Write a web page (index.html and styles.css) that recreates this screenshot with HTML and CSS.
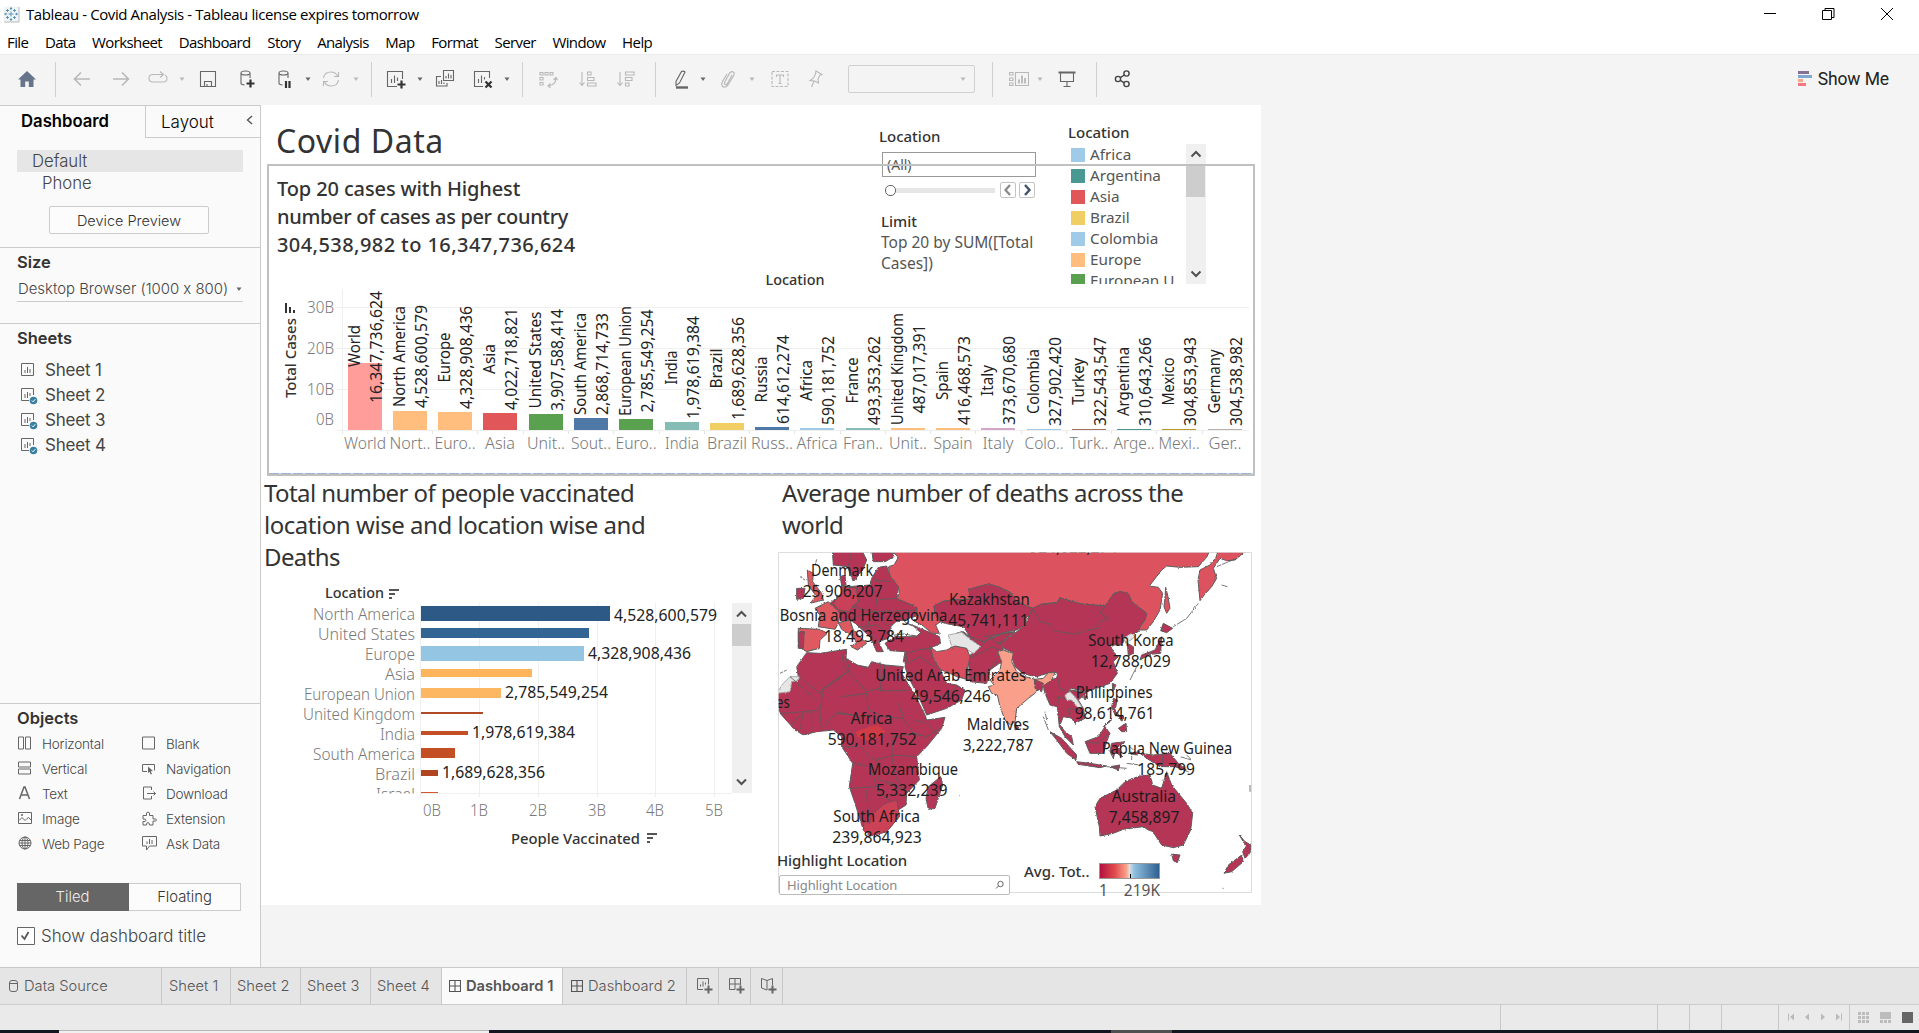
FILE: index.html
```html
<!DOCTYPE html>
<html lang="en">
<head>
<meta charset="utf-8">
<title>Tableau - Covid Analysis</title>
<link rel="stylesheet" href="styles.css">
</head>
<body>
<svg class="defs" width="0" height="0" aria-hidden="true">
  <symbol id="caret" viewBox="0 0 8 20"><path d="M1.5 8.5h5L4 12z" fill="currentColor"/></symbol>
  <symbol id="sheet-used" viewBox="0 0 17 17"><path d="M12.500 7V.5H.5v12H8M4 10V6M6.500 10V4M9 8V5" fill="none" stroke="currentColor"/><circle cx="12.500" cy="12.500" r="3.800" fill="#3a7f9f"/><path d="M10.800 12.500l1.300 1.300 2.200-2.600" fill="none" stroke="#fff"/></symbol>
  <symbol id="grid" viewBox="0 0 12 12"><path d="M.5.5h11v11H.5zM6 .5v11M.5 6h11" fill="none" stroke="currentColor" stroke-width="1.100"/></symbol>
  <symbol id="up" viewBox="0 0 20 20"><path d="M5.500 12.500L10 8l4.500 4.500" fill="none" stroke="#505050" stroke-width="2"/></symbol>
</svg>

<header class="titlebar">
  <svg class="app-icon" width="17" height="17" viewBox="0 0 17 17"><path d="M.5.5h15.500v15.500H.5z" fill="#f1f4f6"/><path d="M16 1v15H1" fill="none" stroke="#b9b9b9"/><path d="M8 5.500v5M5.500 8h5M8 1v3M6.800 2.500h2.400M8 12v3M6.800 13.500h2.400M1.200 8h3M2.700 6.800v2.400M12 8h3M13.500 6.800v2.400M4.500 3v3M3 4.500h3M11.500 3v3M10 4.500h3M4.500 10v3M3 11.500h3M11.500 10v3M10 11.500h3" stroke="#4d8eb5" stroke-width=".9"/></svg>
  <span class="title">Tableau - Covid Analysis - Tableau license expires tomorrow</span>
  <svg class="winbtns" width="140" height="28" viewBox="0 0 140 28"><path d="M11 13.500h12M69.500 10.500h9v9h-9zM72 10.500v-2h9v9h-2M128 8l12 12M140 8l-12 12" fill="none" stroke="#000"/></svg>
</header>
<nav class="menu"><span>File</span><span>Data</span><span>Worksheet</span><span>Dashboard</span><span>Story</span><span>Analysis</span><span>Map</span><span>Format</span><span>Server</span><span>Window</span><span>Help</span></nav>

<div class="toolbar">
  <svg class="i m17 home" viewBox="0 0 20 20"><path d="M10 2l9 8.500h-2.500V18h-4.700v-5.500H8.200V18H3.500v-7.500H1z"/></svg>
  <i class="sep m18"></i>
  <svg class="i m16 off" viewBox="0 0 20 20"><path d="M18 10H3M9 3.500L2.500 10 9 16.500" stroke-width="1.600"/></svg>
  <svg class="i m19 off" viewBox="0 0 20 20"><path d="M2 10h15M11 3.500l6.500 6.500-6.500 6.500" stroke-width="1.600"/></svg>
  <svg class="i m17 off" viewBox="0 0 20 20"><path d="M8 5.500H5q-4 0-4 3.700t4 3.800h10q4 0 4-3.800 0-2.500-2-3.300M8 5.500h7M12 2.500l3.500 3-3.500 3"/></svg>
  <svg class="c m10 off"><use href="#caret"/></svg>
  <svg class="i m12 on" viewBox="0 0 20 20"><path d="M2.500 2.500h15v15h-15zM6.500 17.500v-5h7v5M9 17.500V15"/></svg>
  <svg class="i m18 on" viewBox="0 0 20 20"><path d="M5 4.500v9.800q0 1.500 3.500 1.700M14 9V4.500"/><ellipse cx="9.500" cy="4" rx="4.500" ry="2"/><path d="M14.500 10.500v8M10.500 14.500h8" stroke="#333" stroke-width="2.200"/></svg>
  <svg class="i m18 on" viewBox="0 0 20 20"><path d="M5 4.500v9.800q0 1.500 3.500 1.700M14 9V4.500"/><ellipse cx="9.500" cy="4" rx="4.500" ry="2"/><path d="M12 12v7M15.500 12v7" stroke="#333" stroke-width="2.200"/></svg>
  <svg class="c m10 on"><use href="#caret"/></svg>
  <svg class="i m9 off" viewBox="0 0 20 20"><path d="M2.500 9q1-6 7.500-6 4.500 0 6.500 4M17.500 11q-1 6-7.500 6-4.500 0-6.500-4M17.500 3v4.500H13M2.500 17v-4.500H7"/></svg>
  <svg class="c m11 off"><use href="#caret"/></svg>
  <i class="sep m11"></i>
  <svg class="i m14 on" viewBox="0 0 20 20"><path d="M16.500 10V2.500h-15v15H11M5.500 14v-4M8.500 14V6.500M11.500 12V8.500"/><path d="M15.500 11.500v8M11.500 15.500h8" stroke="#333" stroke-width="2.200"/></svg>
  <svg class="c m10 on"><use href="#caret"/></svg>
  <svg class="i m11 on" viewBox="0 0 20 20"><path d="M8.500 1.500h10v10h-10zM11 9.500V7M13.500 9.500v-5M16 9.500V6M6 7.500H1.500v9.500H12v-3M4 15v-3M6.500 15v-4M9 15v-1.500"/></svg>
  <svg class="i m18 on" viewBox="0 0 20 20"><path d="M16.500 9V2.500h-15v15H10M5.500 14v-4M8.500 14V6.500M11.500 10.500V8"/><path d="M12.500 12.500l6 6M18.500 12.500l-6 6" stroke="#333" stroke-width="2.200"/></svg>
  <svg class="c m10 on"><use href="#caret"/></svg>
  <i class="sep m11"></i>
  <svg class="i m15 off" viewBox="0 0 20 20"><path d="M2 3.500h3v2.500H2zM7 3.500h3v2.500H7zM12 3.500h3v2.500h-3zM2 8.500h3V11H2zM2 13.500h3V16H2zM18 9q0 7-8 8M15.500 11l2.500-2.500 1.500 2.500M12.500 14.500L10 17l2.500 1.800"/></svg>
  <svg class="i m20 off" viewBox="0 0 20 20"><path d="M4 3v13M1.500 13.500L4 16.500l2.500-3M9.500 3h3.500v3H9.500zM9.500 8.500H16v3H9.500zM9.500 14H18v3H9.500z"/></svg>
  <svg class="i m18 off" viewBox="0 0 20 20"><path d="M4 3v13M1.500 13.500L4 16.500l2.500-3M9.500 3H18v3H9.500zM9.500 8.500H16v3H9.500zM9.500 14h3.500v3H9.500z"/></svg>
  <i class="sep m19"></i>
  <svg class="i m16 on" viewBox="0 0 20 20"><path d="M9.500 2.500q2-1 3.500.5l-5.500 11-3.500 2.500 0-4z"/><path d="M4 18.500h12" stroke-width="2.400"/></svg>
  <svg class="c m7 on"><use href="#caret"/></svg>
  <svg class="i m11 off" viewBox="0 0 20 20"><path d="M14 6l-4.500 8.500q-1.800 2-3 .3-.3-1 .4-2L12 3.500q2.500-2 4 .2.400 1.300-.4 3L10 16q-3 3.500-5.800 1-1-2 .3-4.500L9 5" stroke-width="1.200"/></svg>
  <svg class="c m10 off"><use href="#caret"/></svg>
  <svg class="i m14 off" viewBox="0 0 20 20"><path d="M2 2.500h16v15H2z" stroke-dasharray="3 1.500"/><path d="M6.500 8V6h7v2M10 6v8.500M8.500 14.500h3"/></svg>
  <svg class="i m16 off" viewBox="0 0 20 20"><path d="M10 2l6 3.500-2 .5-2 4 .5 4-4-2-4.500-.500 3.500-2.500 2-4zM8 12.500l-2.500 5.500"/></svg>
  <div class="combo m22"><svg class="c off"><use href="#caret"/></svg></div>
  <i class="sep m17"></i>
  <svg class="i m16 off" viewBox="0 0 20 20"><path d="M.5 3.500h3.500V6H.5zM.5 9h3.500v2.500H.5zM.5 14h3.500v2.500H.5zM6.500 3.500h13v13h-13z"/><path d="M10 14.500v-4M13 14.500V6.500M16 14.500V9" stroke-width="1.800"/></svg>
  <svg class="c m7 off"><use href="#caret"/></svg>
  <svg class="i m13 on" viewBox="0 0 20 20"><path d="M3.500 4v8.500h13V4M10 13v4.500M6.500 17.500h7"/><path d="M1.500 3.500h17" stroke-width="2"/></svg>
  <i class="sep m19"></i>
  <svg class="i m16 on dark" viewBox="0 0 20 20"><circle cx="5" cy="10" r="2.600"/><circle cx="13.500" cy="4.500" r="2.600"/><circle cx="13.500" cy="15" r="2.600"/><path d="M7.300 8.600l4-2.600M7.300 11.400l4 2.400"/></svg>
  <div class="showme"><svg width="14" height="16"><path d="M0 0h11v3H0z" fill="#857096"/><path d="M0 4h14v3H0z" fill="#82a6cf"/><path d="M0 8h5v3H0z" fill="#f5a988"/><path d="M0 12h8v3H0z" fill="#f57781"/></svg><span>Show Me</span></div>
</div>

<div class="work">
  <aside class="side">
    <div class="tabs"><b>Dashboard</b><span class="layout">Layout</span><svg class="chev" width="8" height="10"><path d="M6 1L1.500 5 6 9" fill="none" stroke="#555" stroke-width="1.400"/></svg></div>
    <section class="device">
      <div class="dev-default">Default</div>
      <div class="dev-phone">Phone</div>
      <button class="preview">Device Preview</button>
    </section>
    <section class="size"><h2>Size</h2><div class="sizebox"><span>Desktop Browser (1000 x 800)</span><svg class="c"><use href="#caret"/></svg></div></section>
    <section class="sheets"><h2>Sheets</h2>
      <ul>
        <li><svg width="17" height="17" viewBox="0 0 17 17"><path d="M.5.5h12v12H.5zM4 10V7M6.500 10V4M9 10V6" fill="none" stroke="#666"/></svg>Sheet 1</li>
        <li><svg width="17" height="17"><use href="#sheet-used"/></svg>Sheet 2</li>
        <li><svg width="17" height="17"><use href="#sheet-used"/></svg>Sheet 3</li>
        <li><svg width="17" height="17"><use href="#sheet-used"/></svg>Sheet 4</li>
      </ul>
    </section>
    <section class="objects"><h2>Objects</h2>
      <div class="objgrid">
        <span><svg viewBox="0 0 15 15"><path d="M.5 1h5v12h-5zM7.500 1h5v12h-5z"/></svg>Horizontal</span>
        <span><svg viewBox="0 0 15 15"><path d="M.5 1h12v12H.5z"/></svg>Blank</span>
        <span><svg viewBox="0 0 15 15"><path d="M.5 1h12v5H.5zM.5 8h12v5H.5z"/></svg>Vertical</span>
        <span><svg viewBox="0 0 15 15"><path d="M5 10.500H.5v-7h12v6"/><path d="M6 5.500l5 4.500-2.300.3 1.300 2.700-1.300.500-1.200-2.700L6 12z" fill="#666" stroke="none"/></svg>Navigation</span>
        <span><svg viewBox="0 0 15 15"><path d="M1.500 13L6 1h1l4.500 12M3.500 9h6" stroke-width="1.500"/></svg>Text</span>
        <span><svg viewBox="0 0 15 15"><path d="M9.500 4V1H1.500v12h8v-3M5 7.500h8.500M11.500 5.500l2 2-2 2"/></svg>Download</span>
        <span><svg viewBox="0 0 15 15"><path d="M.5 1.500h13v11H.5zM1 9.500l3-3 3 3 2-2 1.500-1 3 3"/><circle cx="4" cy="4" r=".7"/></svg>Image</span>
        <span><svg viewBox="0 0 15 15"><path d="M1 4.500h3.500q-.7-3.500 1.500-3.500t1.500 3.500H11V8q3.500-.7 3.500 1t-3.500 1v4H7.500q0-2.500-1.500-2.500T4.500 14H1v-3.500q3 .5 3-1.200T1 8z"/></svg>Extension</span>
        <span><svg viewBox="0 0 15 15"><circle cx="7" cy="7" r="6"/><ellipse cx="7" cy="7" rx="3" ry="6"/><path d="M7 1v12M1.500 4.500h11M1 7h12M1.500 9.500h11"/></svg>Web Page</span>
        <span><svg viewBox="0 0 15 15"><path d="M.5.500h14v9.500H7.500L4.500 14v-4h-4zM5 8V5.500M7.500 8V3M10 8V4"/></svg>Ask Data</span>
      </div>
      <div class="seg"><span class="sel">Tiled</span><span>Floating</span></div>
      <label class="chk"><svg width="18" height="18"><path d="M.5.5h17v17H.5z" fill="#fff" stroke="#666"/><path d="M4.500 8.500L7.500 12l4-7" fill="none" stroke="#555" stroke-width="1.800"/></svg>Show dashboard title</label>
    </section>
  </aside>

  <main class="dash">
    <h1>Covid Data</h1>
    <section class="zone">
      <p class="zt"><span class="z1">Top 20 cases with Highest</span><br><span class="z2">number of cases as per country</span><br><span class="z3">304,538,982 to 16,347,736,624</span></p>
      <svg id="cases" width="983" height="215" viewBox="269 258 983 215"></svg>
    </section>
    <div class="bottom">
      <section class="vac">
        <h3>Total number of people vaccinated<br><span class="v2">location wise and location wise and</span><br>Deaths</h3>
        <svg id="vac" width="509" height="333" viewBox="261 572 509 333"></svg>
      </section>
      <section class="deaths">
        <h3>Average number of deaths across the<br>world</h3>
        <svg class="map" width="474" height="341" viewBox="24 246 1422 1023">
          <defs>
            <filter id="coast" x="0" y="0" width="1" height="1" filterUnits="objectBoundingBox"><feTurbulence type="fractalNoise" baseFrequency=".16" numOctaves="2" seed="4"/><feDisplacementMap in="SourceGraphic" scale="7" xChannelSelector="R" yChannelSelector="G"/></filter>
            <clipPath id="frame"><path d="M26 248h1418v1020H26z"/></clipPath>
          </defs>
          <path d="M25.500 247.500h1419v1020h-1419z" fill="#fff" stroke="#dcdcdc" stroke-width="3"/>
          <g clip-path="url(#frame)">
          <g filter="url(#coast)" class="land">
            <path d="M0 0h1500v1320H0z" fill="none" stroke="none"/>
            <path class="ru" d="M362 240L385 262 372 285 355 290 360 318 365 335 385 350 388 372 375 385 400 395 440 412 444 438 430 452 460 468 485 490 508 490 497 465 512 455 495 432 492 408 515 395 545 390 600 388 597 358 655 342 685 350 722 368 740 395 790 415 815 402 862 398 868 383 900 400 935 402 1005 408 1022 400 1030 372 1050 365 1075 370 1085 395 1130 430 1125 450 1110 470 1108 480 1130 480 1150 455 1170 420 1178 370 1165 352 1138 348 1175 300 1190 288 1230 292 1285 290 1310 262 1320 240z"/>
            <path class="ru" d="M1284 330L1290 300 1320 285 1338 262 1345 240 1430 240 1395 270 1370 272 1350 265 1330 295 1340 325 1325 350 1305 372 1290 392z"/>
            <path class="ru" d="M1187 352L1194 380 1200 415 1190 430 1182 410 1185 380z"/>
            <path class="dk" d="M492 408L515 395 545 390 600 388 597 358 655 342 685 350 722 368 740 395 788 415 788 440 770 440 765 465 740 480 700 488 670 500 640 515 620 510 600 500 580 470 550 465 525 460 510 455 495 432z"/>
            <path class="dk" d="M788 415L815 402 862 398 868 383 935 402 1005 408 1030 372 1050 365 1075 370 1085 395 1130 430 1125 450 1110 470 1105 485 1070 500 1055 525 1020 525 1030 545 1045 560 1030 575 1042 610 1020 640 980 655 950 665 925 660 905 655 890 665 870 660 862 640 862 610 850 605 800 620 760 612 735 590 725 560 730 548 700 535 690 520 740 485 765 465z"/>
            <path class="ln" d="M788 415L810 455 838 462 850 482 915 492 950 482 985 475 990 455 1015 445 990 430 1005 408"/>
            <path class="dk" d="M560 490L580 485 600 500 640 515 700 490 735 485 690 520 700 540 682 545 695 575 660 600 650 640 600 635 595 560 632 530 600 505 575 485z"/>
            <path class="ln" d="M595 565L640 545 665 530 690 540M632 530L660 500 680 520 700 515M600 625L650 610 680 570M640 500L735 485"/>
            <path class="na" d="M535 495L575 487 600 508 632 530 610 550 585 535 545 530z"/>
            <path class="dk" d="M380 450L440 470 485 490 508 500 512 520 480 535 500 560 450 560 412 555 410 585 400 575 405 545 360 542 345 520 375 500 440 500z"/>
            <path class="sea" d="M362 470L378 455 400 450 412 462 430 468 452 488 440 498 400 492 368 496z"/>
            <path class="dk" d="M412 550L440 540 480 535 490 565 510 600 530 640 560 645 585 660 575 690 530 715 470 735 455 700 430 650 415 620 405 590z"/>
            <path class="ir" d="M480 530L500 545 530 540 555 528 590 535 600 560 592 600 600 630 560 620 530 605 510 600 490 565z"/>
            <path class="ln" d="M412 580L450 560 490 590M470 690L540 670 560 650M420 625L450 600"/>
            <path class="dk" d="M110 548L150 550 230 538 228 565 262 585 295 592 305 575 345 585 400 590 395 610 435 675 465 735 470 750 525 742 515 775 470 830 440 860 448 930 410 970 408 1005 385 1020 388 1040 350 1085 300 1098 280 1080 255 1000 238 950 248 880 215 830 215 800 190 780 140 785 100 795 75 780 30 730 20 665 85 620 80 590z"/>
            <path class="na" d="M20 670L40 640 60 620 88 620 85 632 65 635 60 665z"/>
            <path class="ln" d="M88 620L150 670 160 655 240 600 228 565M215 550L222 590 240 610 290 665 330 655 330 575M330 662H420M240 600L160 660 150 720 100 725 30 730M215 680L290 670 295 720 340 740 400 745M200 725L270 740 300 735M385 700L400 745 430 790 470 800 510 775M125 725V785M150 725L155 780M165 770L195 730 250 735M65 765L90 735M215 830L270 830 300 860 320 870 370 855 440 860M248 880L300 890 320 950 240 955M370 800L365 860 380 930 410 970M320 870L325 930 375 940M290 960L295 1050M320 960L370 1000 310 1030M400 960L350 940M430 750L470 760 500 790M365 800L440 790M60 620L140 690M345 585L330 662M100 725L90 780"/>
            <path class="car" d="M258 785L300 768 325 765 348 785 330 800 290 812 262 800z"/>
            <path class="sa" d="M282 1055L300 1060 310 1030 345 1000 380 990 385 1020 388 1040 350 1085 300 1098 280 1080z"/>
            <path class="dk" d="M512 920L518 945 495 1015 475 1018 468 985 475 950z"/>
            <path class="in" d="M683 545L700 540 730 550 725 575 740 605 765 620 795 628 820 625 835 608 855 608 845 630 825 645 800 660 795 670 775 685 740 715 735 755 722 765 705 750 690 710 682 675 665 670 655 650 672 645 660 630 690 600 695 575z"/>
            <path class="dk" d="M793 628L820 640 815 665 795 655zM735 755L745 775 735 780z"/>
            <path class="dk" d="M820 648L845 630 862 620 870 655 890 665 905 660 950 668 925 690 940 715 945 745 915 760 905 745 880 740 870 765 885 785 905 800 910 825 885 800 868 770 862 710 840 705 825 670z"/>
            <path class="na" d="M885 675L900 665 915 680 935 710 925 715 905 690 890 690zM1060 505L1085 490 1095 500 1070 520z"/>
            <path class="ln" d="M862 710L865 680 885 685M900 740L895 715 930 720"/>
            <path class="dk" d="M187 240H275L290 270 278 300 250 335 240 310 232 290 190 285zM305 240H362L372 260 345 275 310 275z"/>
            <path class="ln" d="M235 290L245 245"/><path class="dk" d="M210 320L225 315 228 345 215 345z"/>
            <path class="dk" d="M325 292L350 288 360 318 385 350 380 385 440 412 440 438 400 450 375 455 362 470 355 505 325 515 340 545 320 545 300 500 255 460 240 450 215 455 200 420 180 400 215 370 215 345 235 350 300 345 305 325z"/>
            <path class="de" d="M190 400L215 370 215 350 260 355 265 395 235 425 205 420z"/>
            <path class="ln" d="M260 355L265 395 245 410 315 425 320 390 310 350M315 425L440 420M245 445L290 430 315 425 355 470M270 470L320 465 350 490M300 440L290 480 320 510M330 388L380 385M310 330L360 335"/>
            <path class="uk" d="M135 415L175 395 210 430 205 460 195 478 145 470 150 435z"/>
            <path class="uk" d="M85 475L150 478 172 490 150 510 148 535 110 545 85 530z"/><path class="dk" d="M85 485H103L100 535H85z"/>
            <path class="uk" d="M205 458L240 450 250 480 285 515 290 520 262 540 240 528 260 520 250 500 215 478z"/>
            <path class="uk" d="M112 300L130 310 128 335 155 370 160 390 120 400 138 378 115 345z"/>
            <path class="dk" d="M80 355L105 355 100 385 80 388z"/>
            <path class="dk" d="M840 785L875 805 920 855 918 870 890 850 860 810zM920 875L960 880 1010 888 990 893 925 883zM945 815L985 800 1005 770 1020 790 1010 815 1000 850 960 850zM1025 820L1065 815 1045 830 1055 860 1035 845 1030 865 1020 845zM1030 685L1042 690 1035 720 1050 740 1035 735 1025 710zM1045 775L1068 760 1070 785 1055 785zM1020 890L1050 885 1045 900zM1110 850L1150 855 1200 850 1225 880 1255 905 1215 890 1170 890 1130 865zM1027 640L1038 645 1028 665zM1000 770L1025 745 1020 755zM1045 735L1062 740 1055 755zM940 675L952 680 945 690zM1075 850L1110 845 1100 855z"/>
            <path class="ln" d="M1177 850V890M945 815L985 820 1010 795M820 740L835 780M1080 830L1090 840M1070 880L1110 885M1230 860L1265 870 1250 855M825 725L830 750M1010 890L1070 895M1085 845L1085 870"/>
            <path class="dk" d="M990 985L1040 960 1065 935 1090 925 1110 918 1140 915 1148 945 1175 955 1190 905 1205 945 1225 970 1250 1000 1268 1030 1262 1080 1240 1125 1210 1133 1175 1125 1155 1095 1150 1085 1135 1080 1120 1070 1060 1078 1030 1090 990 1098 988 1070 975 1010zM1205 1152L1230 1155 1222 1178 1210 1172z"/>
            <path class="dk" d="M1408 1095L1425 1115 1443 1125 1440 1150 1425 1165 1418 1145 1428 1130zM1415 1155L1420 1175 1385 1205 1362 1210 1375 1185z"/>
            <path class="dk" d="M1180 460L1208 475 1190 488 1172 482zM1175 500L1172 550 1140 553 1110 570 1115 555 1155 540zM1072 520L1090 530 1090 550 1075 558z"/>
            <path class="ln" d="M1210 470L1250 445 1285 400M1355 345L1372 350M140 268L135 285M30 610L50 600M1100 590L1080 630M1440 945V965M1358 1255h3M568 977h3M1340 290L1400 265M90 320L105 330"/>
          </g>
          <g class="ml" id="maplabels"></g>
          </g>
        </svg>
        <div class="hl"><b>Highlight Location</b><div class="hlbox"><span>Highlight Location</span><svg width="10" height="10"><circle cx="5.500" cy="4" r="2.700" fill="none" stroke="#666"/><path d="M3.500 6L1 8.500" stroke="#666"/></svg></div></div>
        <div class="ramp"><b>Avg. Tot..</b><div><div class="bar"></div><p><span>1</span><span>219K</span></p></div></div>
      </section>
    </div>

    <div class="filter">
      <b>Location</b>
      <div class="all">(All)</div>
      <div class="slider"><i class="knob"></i><i class="track"></i><svg width="36" height="17"><rect x=".5" y=".5" width="15" height="15" rx="1.500" fill="#fff" stroke="#c4c4c4"/><rect x="19.500" y=".5" width="15" height="15" rx="1.500" fill="#fff" stroke="#c4c4c4"/><path d="M10 3L5.500 8l4.500 5" fill="none" stroke="#888" stroke-width="2.200"/><path d="M25 3l4.500 5-4.500 5" fill="none" stroke="#43536e" stroke-width="2.400"/></svg></div>
      <b class="limit">Limit</b>
      <p>Top 20 by SUM([Total<br>Cases])</p>
    </div>
    <div class="legend">
      <b>Location</b>
      <div class="lgbody">
        <ul><li><i class="c1"></i>Africa</li><li><i class="c2"></i>Argentina</li><li><i class="c3"></i>Asia</li><li><i class="c4"></i>Brazil</li><li><i class="c1"></i>Colombia</li><li><i class="c5"></i>Europe</li><li><i class="c6"></i>European U</li></ul>
        <div class="scroll"><svg width="20" height="21"><use href="#up" width="20" height="20"/></svg><i></i><svg class="dn" width="20" height="21"><use href="#up" width="20" height="20"/></svg></div>
      </div>
    </div>
    <div class="outline"></div>
  </main>
</div>

<footer class="sheettabs">
  <span class="t ds"><svg width="9" height="12"><rect x=".5" y=".5" width="8" height="11" rx="2.500" fill="none" stroke="#666"/><path d="M.5 3.500h8" stroke="#666"/></svg>Data Source</span>
  <span class="t s1">Sheet 1</span><span class="t s2">Sheet 2</span><span class="t s2">Sheet 3</span><span class="t s3">Sheet 4</span>
  <span class="t d1"><svg width="12" height="12"><use href="#grid"/></svg>Dashboard 1</span>
  <span class="t d2"><svg width="12" height="12"><use href="#grid"/></svg>Dashboard 2</span>
  <span class="t n"><svg width="16" height="16" viewBox="0 0 16 16"><path d="M11.500 6.500v-6H.5v11H6M3.500 8.500v-2M6 8.500v-5M8.500 6.500v-2"/><path d="M11.500 7.500v8M7.500 11.500h8" stroke-width="2"/></svg></span>
  <span class="t n"><svg width="16" height="16" viewBox="0 0 16 16"><path d="M11.500 7V.5H.5v11H6M6 .5v11M.5 6h11"/><path d="M11.500 7.500v8M7.500 11.500h8" stroke-width="2"/></svg></span>
  <span class="t n"><svg width="16" height="16" viewBox="0 0 16 16"><path d="M6 12L.5 10V.5L6 2.500l5.500-2V7M6 2.500V12"/><path d="M11.500 7.500v8M7.500 11.500h8" stroke-width="2"/></svg></span>
</footer>
<div class="status"><i class="w157"></i><i class="w32"></i><i class="w32"></i><i class="w57"></i><i class="w71"><svg width="70" height="25"><path d="M9 8.500h1v7H9zM15 8.500v7L11 12zM30 8.500v7L26 12zM42 8.500v7l4-3.500zM57 8.500v7l4-3.500zM62 8.500h1v7h-1z" fill="#b9b9b9"/></svg></i><i class="w70"><svg width="69" height="25"><g fill="#bcbcbc"><path d="M8 7h3v3H8zM12 7h3v3h-3zM16 7h3v3h-3zM8 11h3v3H8zM12 11h3v3h-3zM16 11h3v3h-3zM8 15h3v3H8zM12 15h3v3h-3zM16 15h3v3h-3zM30 7h11v7H30zM30 15h3v3h-3zM34 15h3v3h-3zM38 15h3v3h-3z"/></g><path d="M52 7h11v11H52z" fill="#666"/></svg></i></div>
<div class="taskbar"><i class="search"></i><i class="app"></i></div>
<script src="charts.js"></script>
</body>
</html>
```
FILE: styles.css
```css
* { box-sizing: border-box; }
body { margin: 0; width: 1919px; height: 1033px; overflow: hidden; background: #f4f4f4; color: #333; font-family: Inter, "Liberation Sans", sans-serif; font-feature-settings: "calt" 0; display: flex; flex-direction: column; }
h1, h2, h3, p, ul { margin: 0; padding: 0; font-weight: 400; list-style: none; }
i { font-style: normal; display: block; }
svg { display: block; flex: none; }
.defs { position: absolute; }

.titlebar { height: 28px; background: #fff; display: flex; align-items: center; padding: 0 26px 0 3px; font: 15px/28px "Open Sans", sans-serif; color: #000; }
.title { margin-left: 6px; letter-spacing: -0.4px; }
.winbtns { margin-left: auto; }
.menu { height: 26px; background: #fff; display: flex; gap: 16.6px; padding-left: 7px; font: 15px/28px "Open Sans", sans-serif; color: #000; letter-spacing: -0.6px; }

.toolbar { height: 51px; flex: none; background: #f4f4f4; border-top: 1px solid #ebebeb; display: flex; align-items: center; padding-bottom: 2px; }
.i { width: 20px; height: 20px; fill: none; stroke: currentColor; stroke-width: 1.1; }
.c { width: 8px; height: 20px; color: #666; }
.on { color: #666; } .off { color: #b8b8b8; } .dark { color: #444; stroke-width: 1.4; }
.home { fill: #66758a; stroke: none; }
.sep { width: 1px; height: 35px; background: #d0d0d0; flex: none; }
.m7 { margin-left: 7px; } .m9 { margin-left: 9px; } .m10 { margin-left: 10px; } .m11 { margin-left: 11px; } .m12 { margin-left: 12px; } .m13 { margin-left: 13px; } .m14 { margin-left: 14px; } .m15 { margin-left: 15px; } .m16 { margin-left: 16px; } .m17 { margin-left: 17px; } .m18 { margin-left: 18px; } .m19 { margin-left: 19px; } .m20 { margin-left: 20px; } .m22 { margin-left: 22px; }
.combo { width: 127px; height: 28px; border: 1px solid #d0d0d0; border-radius: 2px; display: flex; align-items: center; justify-content: flex-end; padding-right: 7px; }
.showme { margin-left: auto; margin-right: 30px; display: flex; align-items: center; gap: 6px; font: 17.5px/20px Roboto, sans-serif; color: #222; letter-spacing: -0.1px; }

.work { height: 862px; flex: none; display: flex; }
.side { width: 261px; flex: none; background: #fafafa; border-right: 1px solid #ccc; color: #444; font-weight: 300; display: flex; flex-direction: column; }
.tabs { height: 33px; display: flex; border-top: 1px solid #ccc; color: #000; font-size: 17px; line-height: 30px; }
.tabs b { width: 145px; padding-left: 21px; font-size: 16.7px; font-weight: 600; }
.layout { width: 95px; padding: 1px 0 0 15px; border-left: 1px solid #ccc; border-bottom: 1px solid #ccc; }
.chev { width: 20px; height: 32px; padding: 9px 0 0 6px; border-bottom: 1px solid #ccc; }
.device { height: 110px; padding: 12px 17px 0; border-bottom: 1px solid #ccc; font-size: 16.7px; line-height: 22px; }
.dev-default { background: #e6e6e6; padding-left: 15px; }
.dev-phone { padding-left: 25px; }
.preview { display: block; margin: 12px 0 0 32px; width: 160px; height: 28px; padding: 0; background: #fcfcfc; border: 1px solid #ccc; border-radius: 2px; font: 300 14.5px/26px Inter, sans-serif; color: #333; padding-top: 1px; }
h2 { font-size: 16.500px; font-weight: 600; line-height: 22px; color: #333; }
.size { height: 76px; padding: 3px 17px 0; border-bottom: 1px solid #ccc; }
.sizebox { display: flex; align-items: center; justify-content: space-between; margin-top: 3px; height: 26px; border-bottom: 1px solid #ccc; font-size: 14.9px; padding: 1px 0 0 1px; white-space: nowrap; }
.sheets { height: 380px; padding: 3px 17px 0; border-bottom: 1px solid #ccc; }
.sheets ul { margin-top: 8px; }
.sheets li { display: flex; align-items: center; height: 25px; padding-left: 4px; gap: 7px; font-size: 17px; letter-spacing: -.2px; color: #444; }
.sheets li svg { margin-top: 4px; color: #666; }
.objects { padding: 3px 17px 0; }
.objgrid { display: grid; grid-template-columns: 124px 1fr; grid-auto-rows: 25px; margin-top: 2px; font-size: 13.5px; letter-spacing: -.2px; }
.objgrid span { display: flex; align-items: center; gap: 9px; }
.objgrid svg { width: 15px; height: 15px; fill: none; stroke: #666; margin-left: 1px; }
.seg { display: flex; margin-top: 27px; width: 224px; height: 28px; font-size: 14.800px; line-height: 28px; text-align: center; color: #333; }
.seg span { flex: 1; border: 1px solid #ccc; border-left: 0; line-height: 27px; background: #fcfcfc; }
.seg .sel { background: #666; color: #eee; border-color: #666; }
.chk { display: flex; align-items: center; gap: 6px; margin-top: 15px; font-size: 16.900px; }

.dash { position: relative; width: 1000px; height: 800px; background: #fff; font-family: "Noto Sans", sans-serif; color: #333; }
h1 { height: 59px; padding: 6px 0 0 15px; font-size: 32px; line-height: 59px; letter-spacing: .55px; }
.zone { height: 311px; padding: 11px 0 0 8px; overflow: hidden; }
.zt { padding-left: 8px; font-size: 20px; line-height: 28px; font-weight: 500; height: 83px; }
.z1 { letter-spacing: -.12px; } .z2 { letter-spacing: -.34px; } .z3 { letter-spacing: .42px; }
.bottom { display: grid; grid-template-columns: 509px 491px; height: 430px; }
h3 { font-size: 24px; line-height: 32px; white-space: nowrap; letter-spacing: -.6px; }
.v2 { letter-spacing: -.46px; }
.vac h3 { padding: 2px 0 0 3px; height: 97px; }
.deaths { position: relative; }
.deaths h3 { padding: 2px 0 0 12px; height: 77px; }
.map { margin-left: 8px; }
svg text { font-family: "Noto Sans", sans-serif; font-size: 16px; fill: #222; }
svg .ax { fill: #787878; font-size: 15.500px; font-weight: 300; }
svg .hd { fill: #333; font-size: 15px; font-weight: 500; }
.land path { stroke: #5c5c5c; stroke-width: 3; stroke-linejoin: round; }
.land .dk { fill: #b43557; } .land .ru { fill: #dc525e; } .land .in { fill: #f99f8a; } .land .uk { fill: #df5a60; } .land .ir { fill: #d9505e; } .land .de { fill: #c94058; } .land .sa { fill: #cb4356; stroke: #8d4453; }
.land .car { fill: #d03a44; stroke: none; } .land .na { fill: #e6e6e6; stroke: #aaa; } .land .sea { fill: #fff; } .land .ln { fill: none; stroke-width: 2.500; }
.ml text { font-size: 47px; fill: #1c1c1c; }
b { font-weight: 500; }
.hl { position: absolute; left: 7px; top: 375px; font-size: 15px; line-height: 21px; white-space: nowrap; letter-spacing: -.1px; }
.hlbox { margin: 4px 0 0 2px; width: 231px; height: 20px; border: 1px solid #bbb; border-radius: 2px; background: #fff; display: flex; align-items: center; justify-content: space-between; padding: 0 4px 0 7px; font-size: 13px; color: #888; line-height: 18px; }
.ramp { position: absolute; left: 254px; top: 388px; display: flex; gap: 9px; font-size: 15.500px; line-height: 26px; white-space: nowrap; }
.ramp b { width: 66px; font-size: 15px; line-height: 17px; }
.ramp > div { width: 61px; }
.bar { height: 16px; border: 1px solid #999; background: linear-gradient(#000, #000) 30px 100% / 1px 4px no-repeat, linear-gradient(90deg, #b3123f, #e04a4d 25%, #fba38c 45%, #ddd 50%, #8fc0df 58%, #2f5f90); }
.ramp p { display: flex; justify-content: space-between; line-height: 22px; color: #555; }

.filter { position: absolute; left: 618px; top: 21px; width: 160px; font-size: 15px; line-height: 21px; color: #555; }
.filter b, .legend b { color: #333; display: block; font-size: 15px; }
.all { margin: 5px 0 0 3px; width: 154px; height: 25px; border: 1px solid #999; padding-left: 4px; line-height: 23px; font-size: 14px; }
.slider { display: flex; align-items: center; margin: 4px 0 0 6px; height: 18px; }
.knob { width: 11px; height: 11px; border: 1px solid #666; border-radius: 5px; background: #fff; }
.track { width: 99px; height: 5px; background: #e6e6e6; margin-right: 5px; }
.filter .limit { margin: 12px 0 0 2px; }
.filter p { margin-left: 2px; white-space: nowrap; font-size: 15.500px; }
.legend { position: absolute; left: 807px; top: 17px; font-size: 15.300px; line-height: 21px; color: #555; }
.lgbody { display: flex; height: 140px; overflow: hidden; margin-top: 1px; }
.legend ul { width: 118px; padding-left: 3px; }
.legend li { display: flex; align-items: center; gap: 5px; height: 21px; width: 115px; white-space: nowrap; }
.legend li i { width: 14px; height: 14px; }
.c1 { background: #a0cbe8; } .c2 { background: #499894; } .c3 { background: #e15759; } .c4 { background: #f1ce63; } .c5 { background: #ffbe7d; } .c6 { background: #59a14f; }
.scroll { width: 20px; background: #f0f0f0; display: flex; flex-direction: column; }
.scroll i { height: 32px; width: 19px; background: #cdcdcd; }
.dn { margin-top: auto; transform: rotate(180deg); }
.outline { position: absolute; left: 6px; top: 59px; width: 988px; height: 312px; border: 2px solid #c0c0c0; }
.outline::after { content: ""; display: block; margin-top: 307px; height: 1px; background: repeating-linear-gradient(90deg, #9fb3d1 0 10px, #dde 10px 12px); }

.sheettabs { height: 37px; flex: none; background: #e5e5e5; border-top: 1px solid #c8c8c8; display: flex; font-size: 14.700px; line-height: 37px; font-weight: 300; color: #555; }
.t { display: flex; align-items: center; border-right: 1px solid #c8c8c8; gap: 5px; white-space: nowrap; color: #555; }
.ds { width: 162px; padding-left: 9px; gap: 6px; }
.s1 { width: 69px; padding-left: 7px; } .s2 { width: 70px; padding-left: 6px; } .s3 { width: 71px; padding-left: 6px; }
.d1 { width: 121px; padding-left: 7px; background: #fafafa; font-weight: 600; } .d2 { width: 124px; padding-left: 8px; }
.n { width: 32px; padding-left: 10px; } .n svg { fill: none; stroke: #666; }
.status { height: 26px; flex: none; background: #eaeaea; border-top: 1px solid #ccc; display: flex; justify-content: flex-end; }
.status i { border-left: 1px solid #c8c8c8; }
.w157 { width: 157px; } .w32 { width: 32px; } .w57 { width: 57px; } .w71 { width: 71px; } .w70 { width: 70px; }
.taskbar { height: 3px; flex: none; background: #14161f; padding-left: 59px; display: flex; gap: 622px; }
.search { width: 430px; height: 3px; background: #f0f0f0; border-top: 1px solid #b5b5b5; }
.app { width: 61px; height: 3px; background: #505050; }
```
FILE: charts.js
```js
const NS = 'http://www.w3.org/2000/svg';
function add(parent, tag, attrs, text) {
  const el = document.createElementNS(NS, tag);
  for (const k in attrs) el.setAttribute(k, attrs[k]);
  if (text) el.textContent = text;
  parent.appendChild(el);
  return el;
}
function label(parent, text, x, y, len, cls, anchor) {
  const a = { x, y, class: cls || '', 'text-anchor': anchor || 'start' };
  if (len) { a.textLength = len; a.lengthAdjust = 'spacingAndGlyphs'; }
  return add(parent, 'text', a, text);
}
function sortIcon(parent, x, y) {
  add(parent, 'path', { d: `M${x} ${y + 1}h10M${x} ${y + 5}h6M${x} ${y + 9}h3`, stroke: '#555', 'stroke-width': 2 });
}

/* Total cases: name, axis label, axis label width, name width, value, value width, bar height, colour */
const cases = [
  ['World', 'World', 42, 42, '16,347,736,624', 112, 67, '#ff9d9a'],
  ['North America', 'Nort..', 41, 101, '4,528,600,579', 103, 19, '#ffbe7d'],
  ['Europe', 'Euro..', 41, 50, '4,328,908,436', 103, 18, '#ffbe7d'],
  ['Asia', 'Asia', 30, 30, '4,022,718,821', 102, 17, '#e15759'],
  ['United States', 'Unit..', 38, 97, '3,907,588,414', 102, 16, '#59a14f'],
  ['South America', 'Sout..', 40, 102, '2,868,714,733', 102, 12, '#4e79a7'],
  ['European Union', 'Euro..', 41, 110, '2,785,549,254', 103, 11, '#59a14f'],
  ['India', 'India', 34, 34, '1,978,619,384', 103, 8, '#86bcb6'],
  ['Brazil', 'Brazil', 40, 40, '1,689,628,356', 103, 7, '#f1ce63'],
  ['Russia', 'Russ..', 42, 46, '614,612,274', 89, 3, '#4e79a7'],
  ['Africa', 'Africa', 41, 41, '590,181,752', 89, 2, '#a0cbe8'],
  ['France', 'Fran..', 40, 46, '493,353,262', 89, 2, '#86bcb6'],
  ['United Kingdom', 'Unit..', 38, 112, '487,017,391', 89, 2, '#ffbe7d'],
  ['Spain', 'Spain', 39, 39, '416,468,573', 89, 2, '#ffbe7d'],
  ['Italy', 'Italy', 31, 31, '373,670,680', 89, 2, '#d4a6c8'],
  ['Colombia', 'Colo..', 39, 65, '327,902,420', 89, 1, '#a0cbe8'],
  ['Turkey', 'Turk..', 39, 47, '322,543,547', 89, 1, '#9d7660'],
  ['Argentina', 'Arge..', 41, 69, '310,643,266', 89, 1, '#499894'],
  ['Mexico', 'Mexi..', 41, 48, '304,853,943', 89, 1, '#b6992d'],
  ['Germany', 'Ger..', 33, 64, '304,538,982', 89, 1, '#bab0ac']
];
const c = document.getElementById('cases');
label(c, 'Location', 765.5, 285, 59, 'hd');
add(c, 'path', { d: 'M337 307.500H1249M337 348.500H1249M337 389.500H1249M337 430.500H1249M342.500 289V430', stroke: '#efefef' });
[['30B', 313], ['20B', 354], ['10B', 395], ['0B', 425]].forEach(([t, y]) => label(c, t, 334, y, t === '0B' ? 18 : 27, 'ax', 'end'));
const at = label(c, 'Total Cases', 0, 0, 80, 'hd');
at.setAttribute('transform', 'translate(296 398) rotate(-90)');
add(c, 'path', { d: 'M286 303v10M290 307v6M294 310v3', stroke: '#333', 'stroke-width': 2 });
cases.forEach(([name, short, sw, nw, val, vw, h, col], i) => {
  const x = Math.round(348 + i * 45.26 - .3), top = 430 - h;
  add(c, 'path', { d: `M${x - 5.500} 431v3`, stroke: '#e4e4e4' });
  add(c, 'rect', { x, y: top, width: 34, height: h, fill: col });
  const mid = i === 0 ? 347 : top - 3 - Math.max(nw, vw) / 2;
  const nm = i === 0 ? 346 : mid;
  label(c, name, 0, 0, nw, '', 'middle').setAttribute('transform', `translate(${x + 12} ${nm}) rotate(-90)`);
  label(c, val, 0, 0, vw, '', 'middle').setAttribute('transform', `translate(${x + 34} ${mid}) rotate(-90)`);
  label(c, short, x + 17, 449, sw, 'ax', 'middle');
});

/* People vaccinated: name, name width, bar end, bar top, bar height, colour, value, value baseline */
const people = [
  ['North America', 102, 610, 606, 15, '#2c5985', '4,528,600,579', 621],
  ['United States', 97, 589, 628, 10, '#336594'],
  ['Europe', 50, 584, 646, 15, '#94c5e2', '4,328,908,436', 659],
  ['Asia', 30, 532, 669, 8, '#fdb45b'],
  ['European Union', 111, 501, 688, 10, '#fdb763', '2,785,549,254', 698],
  ['United Kingdom', 112, 483, 712, 2, '#b14a26'],
  ['India', 35, 468, 731, 4, '#c44f24', '1,978,619,384', 738],
  ['South America', 102, 455, 748, 10, '#c44f24'],
  ['Brazil', 40, 438, 770, 6, '#b14522', '1,689,628,356', 778],
  ['Israel', 39, 438, 792, 1, '#d0582a']
];
const v = document.getElementById('vac');
label(v, 'Location', 325, 598, 59, 'hd');
sortIcon(v, 389, 589);
add(v, 'path', { d: 'M420.500 603v194M479.500 603v194M538.500 603v194M597.500 603v194M655.500 603v194M714.500 603v194M420 793.500H732', stroke: '#efefef' });
const clip = add(v, 'clipPath', { id: 'rows' });
add(clip, 'rect', { x: 261, y: 600, width: 480, height: 193.500 });
const rows = add(v, 'g', { 'clip-path': 'url(#rows)' });
people.forEach(([name, w, end, y, h, col, val, vy], i) => {
  label(rows, name, 415, 619.5 + i * 20, w, 'ax', 'end');
  add(rows, 'rect', { x: 421, y, width: end - 421, height: h, fill: col });
  if (val) label(rows, val, end + 4, vy, 103);
});
['0B', '1B', '2B', '3B', '4B', '5B'].forEach((t, i) => label(v, t, [432, 479, 538, 597, 655, 714][i], 816, 18, 'ax', 'middle'));
label(v, 'People Vaccinated', 511, 844, 129, 'hd');
sortIcon(v, 647, 833);
add(v, 'path', { d: 'M732 603h20v190h-20z', fill: '#f0f0f0' });
add(v, 'path', { d: 'M732 624h19v22h-19z', fill: '#cdcdcd' });
add(v, 'path', { d: 'M737 616.500l4.500-4.500 4.500 4.500M737 779.500l4.500 4.500 4.500-4.500', fill: 'none', stroke: '#505050', 'stroke-width': 2 });

/* Map marks: text, left, baseline, width */
[
  ['924,622,274', 778, 250, 264], ['Denmark', 123, 318, 186], ['25,906,207', 98, 381, 240],
  ['Kazakhstan', 537, 405, 242], ['45,741,111', 535, 468, 241], ['Bosnia and Herzegovina', 29, 454, 503],
  ['18,493,784', 162, 516, 240], ['South Korea', 955, 529, 256], ['12,788,029', 962, 592, 240],
  ['United Arab Emirates', 316, 634, 453], ['49,546,246', 422, 697, 240], ['Philippines', 917, 685, 231],
  ['98,614,761', 914, 748, 240], ['es', 18, 714, 41], ['Africa', 242, 763, 125], ['590,181,752', 173, 825, 267],
  ['Maldives', 590, 781, 188], ['3,222,787', 578, 844, 212], ['Papua New Guinea', 995, 852, 392],
  ['185,799', 1102, 915, 173], ['Mozambique', 294, 916, 270], ['5,332,239', 318, 979, 215],
  ['Australia', 1025, 997, 193], ['7,458,897', 1016, 1060, 212], ['South Africa', 190, 1057, 260], ['239,864,923', 187, 1119, 268]
].forEach(([t, x, y, w]) => label(document.getElementById('maplabels'), t, x, y, w));
```
